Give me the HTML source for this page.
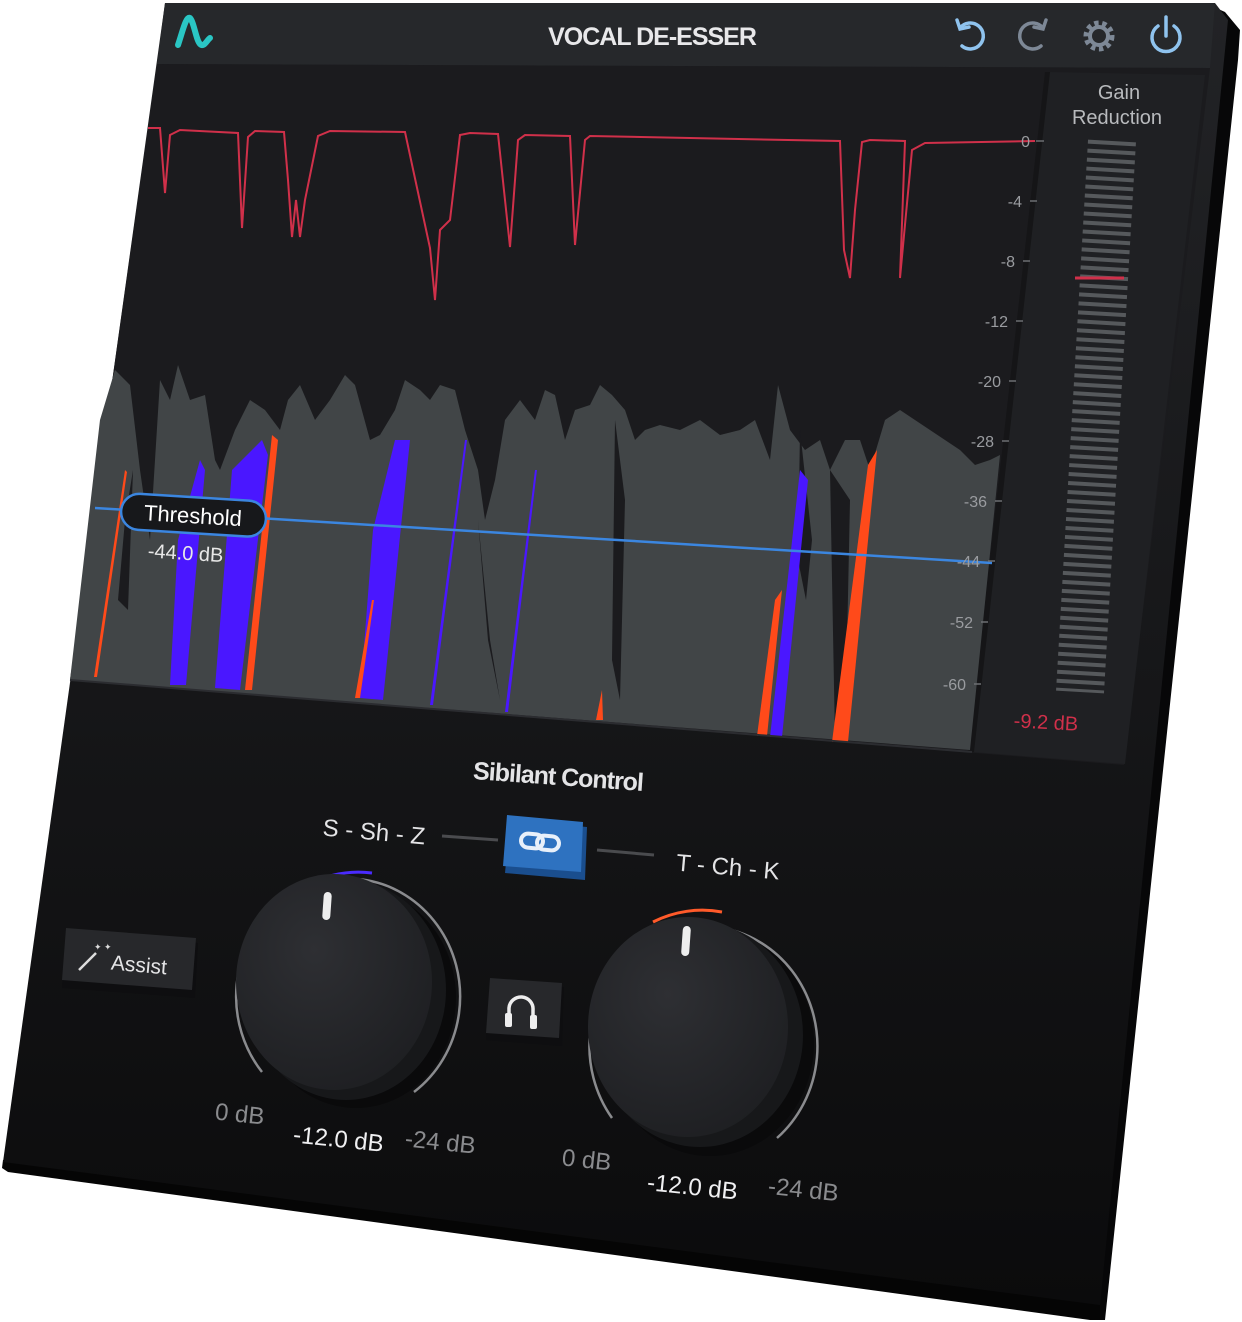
<!DOCTYPE html>
<html><head><meta charset="utf-8"><style>
html,body{margin:0;padding:0;background:#fff;}
svg{display:block}
text{font-family:"Liberation Sans",sans-serif}
</style></head><body>
<svg width="1242" height="1322" viewBox="0 0 1242 1322" xmlns="http://www.w3.org/2000/svg">
<defs>
<linearGradient id="bot" x1="0" y1="0" x2="0" y2="1">
<stop offset="0" stop-color="#222326"/><stop offset="1" stop-color="#0b0b0c"/></linearGradient>
<radialGradient id="kn" cx="0.4" cy="0.35" r="0.7">
<stop offset="0" stop-color="#2e2f33"/><stop offset="1" stop-color="#1e1f22"/></radialGradient>
</defs>
<polygon points="1205,3 1225,12 1240,30 1238,60 1105,1320 1095,1320 1100,1300" fill="#070708"/>
<polygon points="3,1160 1100,1300 1100,1320 1090,1320 8,1172 2,1168" fill="#050505"/>
<polygon points="165,3 1215,3 1228,20 1100,1305 3,1162" fill="url(#bot)"/>
<polygon points="165,3 1215,3 1210,68 157,64" fill="#26282b"/>
<polygon points="157,64 1210,68 1124,765 70,680" fill="#1b1b1e"/>
<polygon points="1048,72 1205,75 1125,764 972,752" fill="#1f2023"/>
<polygon points="1045,72 1050,72 974,752 968,752" fill="#151517"/>
<polygon fill="#414547" points="70,680 100,420 115,370 130,385 140,470 150,540 160,380 170,400 178,365 190,400 205,395 215,460 220,470 235,430 250,400 265,410 280,430 288,400 300,385 315,420 330,400 345,375 355,385 370,440 380,435 395,410 405,380 420,390 430,400 440,385 455,390 465,430 478,470 485,520 495,480 505,420 520,400 535,420 545,390 555,395 565,440 575,410 590,405 600,385 612,395 625,410 635,440 645,430 660,425 680,430 700,420 720,435 740,430 755,420 770,460 778,385 790,430 805,450 820,440 830,470 845,440 860,440 870,470 885,420 900,410 915,420 930,430 945,440 960,450 975,465 990,460 1000,455 970,750"/>
<polygon fill="#1b1b1e" points="118,600 125,520 133,470 128,610"/>
<polygon fill="#1b1b1e" points="478,520 490,640 500,700 488,640"/>
<polygon fill="#1b1b1e" points="615,420 625,500 620,700 612,660"/>
<polygon fill="#1b1b1e" points="800,430 812,540 806,600 798,560"/>
<polygon fill="#1b1b1e" points="830,470 850,500 845,740 835,740"/>
<polygon fill="#4a17ff" points="178,540 200,460 205,470 186,685 170,685"/>
<polygon fill="#4a17ff" points="232,470 262,440 268,455 240,690 215,688"/>
<polygon fill="#ff4a1a" points="245,690 272,435 278,440 252,690"/>
<polygon fill="#ff4a1a" points="94,677 125,470 127,472 97,677"/>
<polygon fill="#4a17ff" points="373,530 395,440 410,440 383,700 360,698"/>
<polygon fill="#ff4a1a" points="355,698 372,600 374,600 360,698"/>
<polygon fill="#4a17ff" points="430,705 465,440 467,440 433,705"/>
<polygon fill="#4a17ff" points="505,712 535,470 537,470 508,712"/>
<polygon fill="#ff4a1a" points="596,720 602,690 603,720"/>
<polygon fill="#ff4a1a" points="757,736 775,600 782,590 767,736"/>
<polygon fill="#4a17ff" points="770,737 800,470 808,480 782,737"/>
<polygon fill="#ff4a1a" points="832,742 868,465 877,450 848,742"/>
<line x1="70" y1="680" x2="972" y2="752" stroke="#2b2c30" stroke-width="2"/>
<polyline fill="none" stroke="#d0304a" stroke-width="2" points="148,128 160,128 165,193 170,135 180,130 238,133 242,228 248,137 255,131 284,132 288,180 292,237 296,200 300,237 305,200 318,136 330,131 405,132 430,248 435,300 440,230 450,220 460,135 470,133 498,134 505,200 510,247 518,140 525,135 570,136 575,245 585,140 590,136 840,141 844,250 850,278 855,210 862,142 870,140 905,141 900,278 912,150 925,143 1035,141"/>
<line x1="95" y1="508" x2="992" y2="563" stroke="#3b86e0" stroke-width="2.5"/>
<g transform="rotate(3.5 190 515)">
<rect x="121" y="497" width="145" height="36" rx="18" fill="#17181b" stroke="#3b86e0" stroke-width="2.5"/>
<text x="193" y="523" font-size="22" fill="#fff" text-anchor="middle">Threshold</text>
<text x="188" y="560" font-size="20" fill="#e8e8e8" text-anchor="middle">-44.0 dB</text>
</g>
<g font-size="16" fill="#9a9ca0" text-anchor="end">
<text x="1030" y="147">0</text><text x="1022" y="207">-4</text><text x="1015" y="267">-8</text>
<text x="1008" y="327">-12</text><text x="1001" y="387">-20</text><text x="994" y="447">-28</text>
<text x="987" y="507">-36</text><text x="980" y="567">-44</text><text x="973" y="628">-52</text><text x="966" y="690">-60</text>
</g>
<g stroke="#6c6e72" stroke-width="1.5">
<line x1="1036" y1="141" x2="1044" y2="141"/><line x1="1030" y1="201" x2="1037" y2="201"/><line x1="1023" y1="261" x2="1030" y2="261"/>
<line x1="1016" y1="321" x2="1023" y2="321"/><line x1="1009" y1="381" x2="1016" y2="381"/><line x1="1002" y1="441" x2="1009" y2="441"/>
<line x1="995" y1="501" x2="1002" y2="501"/><line x1="988" y1="561" x2="995" y2="561"/><line x1="981" y1="622" x2="988" y2="622"/><line x1="974" y1="684" x2="981" y2="684"/>
</g>
<text x="1119" y="99" font-size="20" fill="#b8babd" text-anchor="middle">Gain</text>
<text x="1117" y="124" font-size="20" fill="#b8babd" text-anchor="middle">Reduction</text>
<line x1="1112" y1="141" x2="1080" y2="692" stroke="#56595c" stroke-width="48" stroke-dasharray="4 5"/>
<line x1="1075" y1="278" x2="1124" y2="278" stroke="#d0304a" stroke-width="3"/>
<text x="1046" y="729" font-size="20" fill="#d0304a" text-anchor="middle" transform="rotate(3 1046 722)">-9.2 dB</text>
<path d="M178,45 C183,30 186,16 190,18 C194,22 196,40 200,44 C204,48 207,40 210,38" stroke="#2ac6c4" stroke-width="6" fill="none" stroke-linecap="round"/>
<text x="652" y="45" font-size="25" font-weight="bold" fill="#e8e8ea" text-anchor="middle" letter-spacing="-1">VOCAL DE-ESSER</text>
<g fill="none" stroke="#8fc3ee" stroke-width="3.5" stroke-linecap="round">
<path d="M960,28 A13,13 0 1 1 962,46"/><path d="M957,20 L960,29 L969,27"/>
</g>
<g fill="none" stroke="#7d8896" stroke-width="3.5" stroke-linecap="round">
<path d="M1043,28 A13,13 0 1 0 1041,46"/><path d="M1046,20 L1043,29 L1034,27"/>
</g>
<g transform="translate(1099 36)">
<circle r="12" fill="none" stroke="#7d8896" stroke-width="7" stroke-dasharray="4 3.4"/>
<circle r="9" fill="none" stroke="#7d8896" stroke-width="4"/>
</g>
<g fill="none" stroke="#8fc3ee" stroke-width="3.5" stroke-linecap="round">
<path d="M1158,26 A14,14 0 1 0 1174,26"/><line x1="1166" y1="17" x2="1166" y2="36"/>
</g>
<text x="558" y="785" font-size="25" font-weight="bold" fill="#e4e4e6" text-anchor="middle" transform="rotate(4 558 778)" letter-spacing="-1">Sibilant Control</text>
<text x="374" y="840" font-size="24" fill="#e4e4e6" text-anchor="middle" transform="rotate(5 374 832)">S - Sh - Z</text>
<text x="728" y="875" font-size="24" fill="#e4e4e6" text-anchor="middle" transform="rotate(5 728 866)">T - Ch - K</text>
<line x1="442" y1="836" x2="498" y2="840" stroke="#4a4b4e" stroke-width="3"/>
<line x1="597" y1="850" x2="654" y2="855" stroke="#4a4b4e" stroke-width="3"/>
<polygon points="510,820 587,827 585,880 505,873" fill="#1a4e8e"/>
<polygon points="507,815 583,822 581,872 503,866" fill="#2e72c0"/>
<g fill="none" stroke="#e8f0fa" stroke-width="4">
<rect x="521" y="834" width="22" height="14" rx="7" transform="rotate(5 532 841)"/>
<rect x="537" y="836" width="22" height="14" rx="7" transform="rotate(5 548 843)"/>
</g>
<polygon points="66,932 198,943 195,998 62,988" fill="#0e0e10"/>
<polygon points="66,928 196,938 192,990 62,980" fill="#27282b"/>
<line x1="79" y1="970" x2="96" y2="953" stroke="#ddd" stroke-width="2.5"/>
<text x="94" y="950" font-size="9" fill="#ddd">✦ ✦</text>
<text x="139" y="972" font-size="21" fill="#e4e4e6" text-anchor="middle" transform="rotate(5 139 965)">Assist</text>
<polygon points="490,982 564,987 562,1046 486,1040" fill="#0e0e10"/>
<polygon points="490,978 562,983 559,1038 486,1033" fill="#27282b"/>
<path d="M509,1018 L509,1008 A12,12 0 0 1 533,1010 L533,1020" fill="none" stroke="#eee" stroke-width="3.5"/>
<rect x="505" y="1013" width="7" height="14" rx="2" fill="#eee"/>
<rect x="530" y="1015" width="7" height="14" rx="2" fill="#eee"/>
<path d="M262,1072 A112,118 0 1 1 414,1092" fill="none" stroke="#8a8b8e" stroke-width="2.5"/>
<path d="M308,885 A112,118 0 0 1 372,873" fill="none" stroke="#4a2bff" stroke-width="3"/>
<ellipse cx="356" cy="998" rx="100" ry="110" fill="#0a0a0b"/>
<ellipse cx="346" cy="990" rx="100" ry="110" fill="#17181a"/>
<ellipse cx="334" cy="982" rx="98" ry="108" fill="url(#kn)"/>
<rect x="323" y="892" width="8" height="28" rx="4" fill="#eee" transform="rotate(4 327 906)"/>
<path d="M612,1118 A114,120 0 1 1 777,1138" fill="none" stroke="#8a8b8e" stroke-width="2.5"/>
<path d="M653,922 A114,120 0 0 1 722,912" fill="none" stroke="#ff5a2a" stroke-width="3"/>
<ellipse cx="710" cy="1043" rx="104" ry="113" fill="#0a0a0b"/>
<ellipse cx="700" cy="1035" rx="103" ry="112" fill="#17181a"/>
<ellipse cx="688" cy="1027" rx="100" ry="110" fill="url(#kn)"/>
<rect x="682" y="926" width="8" height="30" rx="4" fill="#eee" transform="rotate(4 686 941)"/>
<g font-size="24" fill="#8a8b8e">
<text x="215" y="1122" transform="rotate(6 240 1115)">0 dB</text>
<text x="405" y="1150" transform="rotate(6 440 1142)">-24 dB</text>
<text x="562" y="1168" transform="rotate(6 588 1160)">0 dB</text>
<text x="768" y="1198" transform="rotate(6 808 1190)">-24 dB</text>
</g>
<g font-size="24" fill="#f0f0f2">
<text x="293" y="1147" transform="rotate(6 338 1140)">-12.0 dB</text>
<text x="647" y="1195" transform="rotate(6 694 1188)">-12.0 dB</text>
</g>
</svg>
</body></html>
